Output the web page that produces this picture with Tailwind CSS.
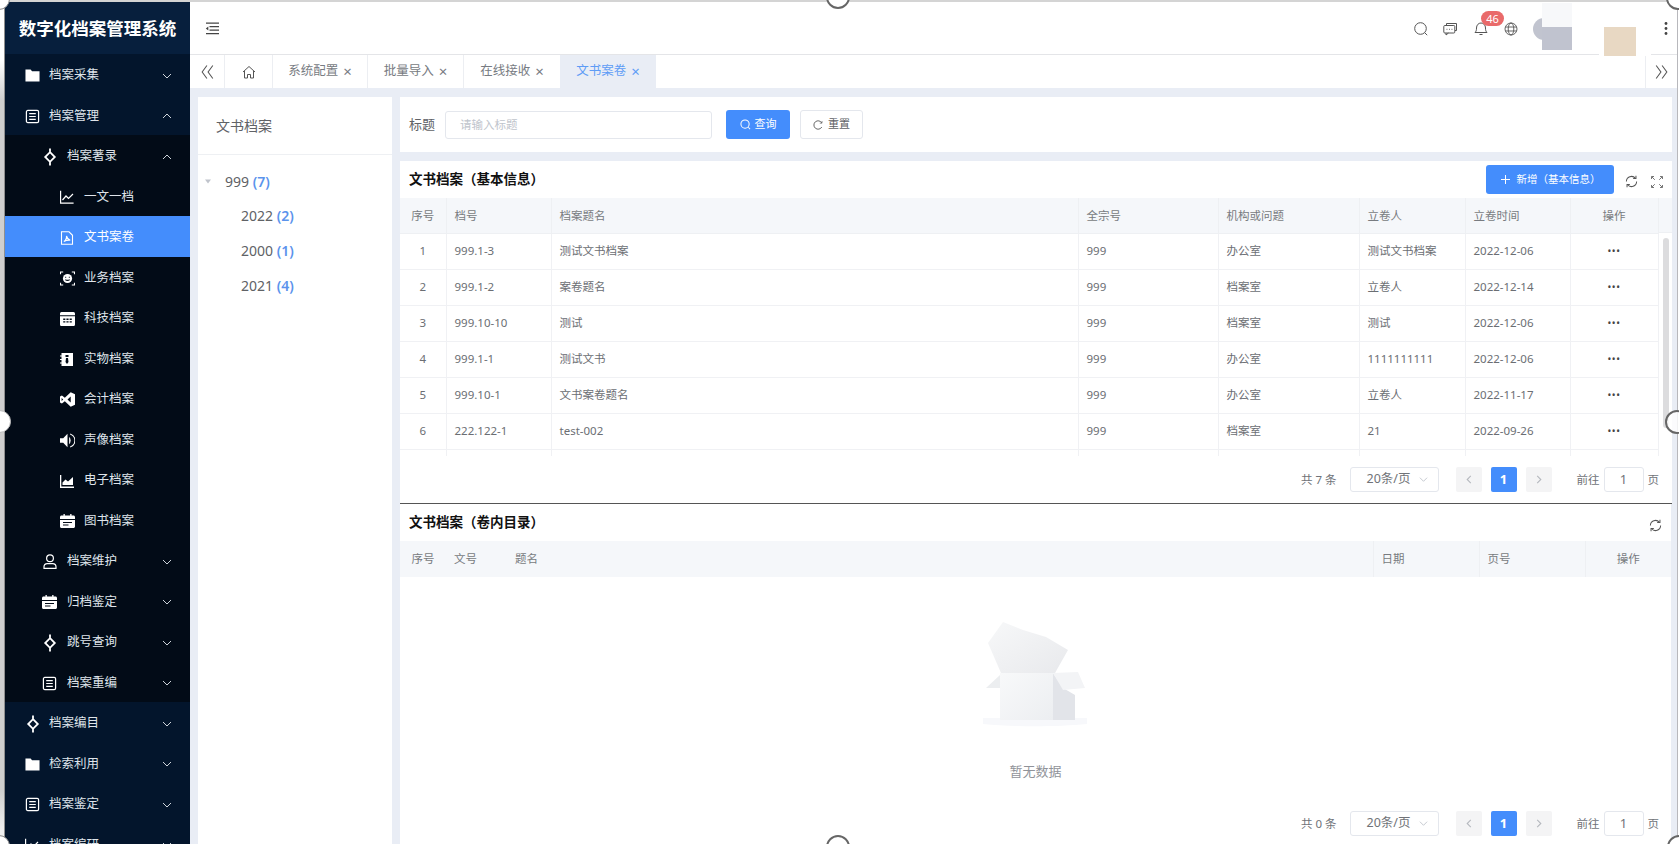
<!DOCTYPE html>
<html lang="zh-CN">
<head>
<meta charset="utf-8">
<title>数字化档案管理系统</title>
<script src="https://cdn.jsdelivr.net/npm/@tailwindcss/browser@4"></script>
</head>
<body class="m-0">
<div class="relative flex w-[1679px] h-[844px] overflow-hidden bg-white font-['Noto_Sans','Noto_Sans_CJK_SC',sans-serif] text-[#606266]">

  <!-- left window edge -->
  <div class="w-[5px] shrink-0 border-r border-[#8f8f8f] bg-[linear-gradient(to_bottom,#ffffff_0,#ffffff_60px,#cfcfcf_100px,#cfcfcf_790px,#f0f0f0_830px)]"></div>

  <!-- sidebar -->
  <aside class="w-[185px] shrink-0 mt-[2px] flex flex-col bg-[#03152c] text-[#dfe4ea] text-[12.5px]">
    <div class="h-[52px] shrink-0 flex items-center justify-center bg-[#071f3d] text-white text-[17.5px] font-bold">数字化档案管理系统</div>
    <div class="flex flex-col">
      <div class="h-[40.5px] pt-[3px] flex items-center pl-[20px] pr-[18px]">
        <svg class="w-[15px] h-[15px] mr-[9px]" viewBox="0 0 16 16" fill="#fff"><path d="M0.500 1.500h5.500l1.500 2h8v11h-15z"/></svg>
        <span class="flex-1">档案采集</span>
        <svg class="w-[10px] h-[10px]" viewBox="0 0 10 10" fill="none" stroke="#cfd5dc"><path d="M1 3l4 4 4-4"/></svg>
      </div>
      <div class="h-[40.5px] pt-[3px] flex items-center pl-[20px] pr-[18px]">
        <svg class="w-[15px] h-[15px] mr-[9px]" viewBox="0 0 16 16" fill="none" stroke="#fff" stroke-width="1.300"><rect x="1.500" y="1.500" width="13" height="13" rx="1.500"/><path d="M4.500 5h7M4.500 8h7M4.500 11h7"/></svg>
        <span class="flex-1">档案管理</span>
        <svg class="w-[10px] h-[10px]" viewBox="0 0 10 10" fill="none" stroke="#cfd5dc"><path d="M1 7l4-4 4 4"/></svg>
      </div>

      <div class="flex flex-col bg-[#020b17]">
        <div class="h-[40.5px] pt-[3px] flex items-center pl-[37px] pr-[18px]">
          <svg class="w-[16px] h-[18px] mr-[9px]" viewBox="0 0 16 18" fill="none" stroke="#fff" stroke-width="1.800"><path d="M8 0.500v3.500M8 14v3.500M8 4.200l4.800 4.800L8 13.800 3.200 9z"/></svg>
          <span class="flex-1">档案著录</span>
          <svg class="w-[10px] h-[10px]" viewBox="0 0 10 10" fill="none" stroke="#cfd5dc"><path d="M1 7l4-4 4 4"/></svg>
        </div>
        <div class="h-[40.5px] pt-[3px] flex items-center pl-[55px]">
          <svg class="w-[14px] h-[14px] mr-[10px]" viewBox="0 0 14 14" fill="none" stroke="#fff" stroke-width="1.200"><path d="M0.600 0.800v12.400h13M2.500 10l3.500-4 2.500 2.500 4.500-4.500"/></svg>
          <span>一文一档</span>
        </div>
        <div class="h-[40.5px] pt-[3px] flex items-center pl-[55px] bg-[#448dfc] text-white">
          <svg class="w-[14px] h-[14px] mr-[10px]" viewBox="0 0 14 14" fill="none" stroke="#fff" stroke-width="1.100"><path d="M1.500 0.800h7.500l3.500 3.500v9H1.500z"/><path d="M3.800 10.500c1.800-1 2.800-3.500 2.700-5.500.6 2.400 2 3.800 3.800 4.200-2.300-.2-4.500.2-6.500 1.300z"/></svg>
          <span>文书案卷</span>
        </div>
        <div class="h-[40.5px] pt-[3px] flex items-center pl-[55px]">
          <svg class="w-[15px] h-[15px] mr-[9px]" viewBox="0 0 14 14" fill="none" stroke="#fff" stroke-width="1"><path d="M0.500 3V1h2.500M11 1h2.500v2M13.500 11v2H11M3 13H0.500v-2"/><circle cx="7" cy="7" r="4.300" fill="#fff" stroke="none"/><path d="M5 8c1 1 3 1 4 0" stroke="#020b17"/><path d="M4.800 5.800h1M8.200 5.800h1" stroke="#020b17"/></svg>
          <span>业务档案</span>
        </div>
        <div class="h-[40.5px] pt-[3px] flex items-center pl-[55px]">
          <svg class="w-[15px] h-[15px] mr-[9px]" viewBox="0 0 14 14" fill="#fff"><path d="M0 2.500C0 1.700.6 1 1.400 1h11.200c.8 0 1.400.7 1.400 1.500V4H0z"/><path fill-rule="evenodd" d="M0 5h14v7.500c0 .8-.6 1.500-1.400 1.500H1.400C.6 14 0 13.300 0 12.500zM3 7v1.300h2V7zM6 7v1.300h2V7zM9 7v1.300h2V7zM3 9.500v1.300h2V9.500zM6 9.500v1.300h2V9.500zM9 9.500v1.300h2V9.500z"/></svg>
          <span>科技档案</span>
        </div>
        <div class="h-[40.5px] pt-[3px] flex items-center pl-[55px]">
          <svg class="w-[14px] h-[15px] mr-[10px]" viewBox="0 0 14 14" fill="#fff"><path fill-rule="evenodd" d="M1.500 0.500H13v13H1.500V11H0v-1h1.500V7.500H0v-1h1.500V4H0V3h1.500zM5.500 2.500v2h3v-2zM6 5.500l-.5 4L7 11.500l1.500-2-.5-4z"/></svg>
          <span>实物档案</span>
        </div>
        <div class="h-[40.5px] pt-[3px] flex items-center pl-[55px]">
          <svg class="w-[15px] h-[15px] mr-[9px]" viewBox="0 0 14 14" fill="#fff"><path fill-rule="evenodd" d="M10 0.300L14 2v10l-4 1.700-5.500-5L1.800 10.800 0 9.800V4.200l1.800-1 2.700 2.100zM10 4.300L7 7l3 2.700zM1.500 5.500v3L3 7z"/></svg>
          <span>会计档案</span>
        </div>
        <div class="h-[40.5px] pt-[3px] flex items-center pl-[55px]">
          <svg class="w-[15px] h-[15px] mr-[9px]" viewBox="0 0 14 14" fill="#fff"><path d="M0 4.800h3L7 .8v12.400l-4-4H0z"/><path d="M8.500 3.500a5 5 0 010 7z"/><path d="M9.500 1a6.300 6.300 0 010 12" fill="none" stroke="#fff" stroke-width="1"/></svg>
          <span>声像档案</span>
        </div>
        <div class="h-[40.5px] pt-[3px] flex items-center pl-[55px]">
          <svg class="w-[14px] h-[14px] mr-[10px]" viewBox="0 0 14 14" fill="#fff"><path d="M0 1h1.300v11.500H14V14H0z"/><path d="M2.500 11V8.500l3-3L8 7.500l5-4.500v8z"/></svg>
          <span>电子档案</span>
        </div>
        <div class="h-[40.5px] pt-[3px] flex items-center pl-[55px]">
          <svg class="w-[15px] h-[14px] mr-[9px]" viewBox="0 0 15 14" fill="#fff"><path fill-rule="evenodd" d="M1.500 1.500h2V0h1.300v1.500h5.400V0h1.300v1.500h2c.8 0 1.500.7 1.500 1.500v9.500c0 .8-.7 1.500-1.500 1.500h-12C.7 14 0 13.300 0 12.500V3c0-.8.700-1.500 1.500-1.500zM0 5v1h15V5zM3 8v1h9V8zM3 10.500v1h5.500v-1z"/></svg>
          <span>图书档案</span>
        </div>
        <div class="h-[40.5px] pt-[3px] flex items-center pl-[38px] pr-[18px]">
          <svg class="w-[14px] h-[15px] mr-[10px]" viewBox="0 0 14 15" fill="none" stroke="#fff" stroke-width="1.200"><circle cx="7" cy="4.200" r="3.400"/><path d="M1 14.300v-1.500c0-2 1.500-3.200 3.300-3.200h5.400c1.800 0 3.300 1.200 3.300 3.200v1.500z"/></svg>
          <span class="flex-1">档案维护</span>
          <svg class="w-[10px] h-[10px]" viewBox="0 0 10 10" fill="none" stroke="#cfd5dc"><path d="M1 3l4 4 4-4"/></svg>
        </div>
        <div class="h-[40.5px] pt-[3px] flex items-center pl-[37px] pr-[18px]">
          <svg class="w-[15px] h-[14px] mr-[10px]" viewBox="0 0 15 14" fill="#fff"><path fill-rule="evenodd" d="M1.500 1.500h2V0h1.300v1.500h5.400V0h1.300v1.500h2c.8 0 1.500.7 1.500 1.500v9.500c0 .8-.7 1.500-1.500 1.500h-12C.7 14 0 13.300 0 12.500V3c0-.8.700-1.500 1.500-1.500zM0 5v1h15V5zM3 8v1h9V8zM3 10.500v1h5.500v-1z"/></svg>
          <span class="flex-1">归档鉴定</span>
          <svg class="w-[10px] h-[10px]" viewBox="0 0 10 10" fill="none" stroke="#cfd5dc"><path d="M1 3l4 4 4-4"/></svg>
        </div>
        <div class="h-[40.5px] pt-[3px] flex items-center pl-[37px] pr-[18px]">
          <svg class="w-[16px] h-[18px] mr-[9px]" viewBox="0 0 16 18" fill="none" stroke="#fff" stroke-width="1.800"><path d="M8 0.500v3.500M8 14v3.500M8 4.200l4.800 4.800L8 13.800 3.200 9z"/></svg>
          <span class="flex-1">跳号查询</span>
          <svg class="w-[10px] h-[10px]" viewBox="0 0 10 10" fill="none" stroke="#cfd5dc"><path d="M1 3l4 4 4-4"/></svg>
        </div>
        <div class="h-[40.5px] pt-[3px] flex items-center pl-[37px] pr-[18px]">
          <svg class="w-[15px] h-[15px] mr-[10px]" viewBox="0 0 16 16" fill="none" stroke="#fff" stroke-width="1.300"><rect x="1.500" y="1.500" width="13" height="13" rx="1.500"/><path d="M4.500 5h7M4.500 8h7M4.500 11h7"/></svg>
          <span class="flex-1">档案重编</span>
          <svg class="w-[10px] h-[10px]" viewBox="0 0 10 10" fill="none" stroke="#cfd5dc"><path d="M1 3l4 4 4-4"/></svg>
        </div>
      </div>

      <div class="h-[40.5px] pt-[3px] flex items-center pl-[20px] pr-[18px]">
        <svg class="w-[16px] h-[18px] mr-[8px]" viewBox="0 0 16 18" fill="none" stroke="#fff" stroke-width="1.800"><path d="M8 0.500v3.500M8 14v3.500M8 4.200l4.800 4.800L8 13.800 3.200 9z"/></svg>
        <span class="flex-1">档案编目</span>
        <svg class="w-[10px] h-[10px]" viewBox="0 0 10 10" fill="none" stroke="#cfd5dc"><path d="M1 3l4 4 4-4"/></svg>
      </div>
      <div class="h-[40.5px] pt-[3px] flex items-center pl-[20px] pr-[18px]">
        <svg class="w-[15px] h-[15px] mr-[9px]" viewBox="0 0 16 16" fill="#fff"><path d="M0.500 1.500h5.500l1.500 2h8v11h-15z"/></svg>
        <span class="flex-1">检索利用</span>
        <svg class="w-[10px] h-[10px]" viewBox="0 0 10 10" fill="none" stroke="#cfd5dc"><path d="M1 3l4 4 4-4"/></svg>
      </div>
      <div class="h-[40.5px] pt-[3px] flex items-center pl-[20px] pr-[18px]">
        <svg class="w-[15px] h-[15px] mr-[9px]" viewBox="0 0 16 16" fill="none" stroke="#fff" stroke-width="1.300"><rect x="1.500" y="1.500" width="13" height="13" rx="1.500"/><path d="M4.500 5h7M4.500 8h7M4.500 11h7"/></svg>
        <span class="flex-1">档案鉴定</span>
        <svg class="w-[10px] h-[10px]" viewBox="0 0 10 10" fill="none" stroke="#cfd5dc"><path d="M1 3l4 4 4-4"/></svg>
      </div>
      <div class="h-[40.5px] pt-[3px] flex items-center pl-[20px] pr-[18px]">
        <svg class="w-[14px] h-[14px] mr-[10px]" viewBox="0 0 14 14" fill="none" stroke="#fff" stroke-width="1.200"><path d="M0.600 0.800v12.400h13M2.500 10l3.500-4 2.500 2.500 4.500-4.500"/></svg>
        <span class="flex-1">档案编研</span>
        <svg class="w-[10px] h-[10px]" viewBox="0 0 10 10" fill="none" stroke="#cfd5dc"><path d="M1 3l4 4 4-4"/></svg>
      </div>
    </div>
  </aside>

  <!-- main -->
  <div class="flex-1 min-w-0 mt-[2px] flex flex-col">
    <!-- header -->
    <header class="relative h-[53px] shrink-0 flex items-center pl-[15px] pr-[9px] border-b border-[#e4e5e8] bg-white">
      <svg class="w-[14px] h-[13px]" viewBox="0 0 14 13" fill="none" stroke="#444" stroke-width="1.200"><path d="M1 1.200h13M4.500 4.700h9.500M4.500 8.200h9.500M1 11.700h13"/><path d="M3.300 4.500L.8 6.500l2.500 2z" fill="#444" stroke="none"/></svg>
      <div class="flex-1"></div>
      <svg class="w-[14px] h-[14px] mr-[15px] mt-[1px]" viewBox="0 0 14 14" fill="none" stroke="#555" stroke-width="1"><circle cx="6.500" cy="6.500" r="5.800"/><path d="M10.700 10.700l2.500 2.500"/></svg>
      <svg class="w-[14px] h-[14px] mr-[17px] mt-[1px]" viewBox="0 0 14 14" fill="none" stroke="#555" stroke-width="1"><path d="M3.500 3V1.500h10V8.500H12"/><rect x="0.800" y="3.500" width="11" height="7.500" rx="1"/><path d="M3 11v2l2.500-2M3.500 7.300h.9M6 7.300h.9M8.500 7.300h.9"/></svg>
      <svg class="w-[14px] h-[15px] mr-[16px] mt-[1px]" viewBox="0 0 14 15" fill="none" stroke="#555" stroke-width="1"><path d="M1 11.500c1-1 1.500-2 1.500-4.500 0-3 2-5 4.500-5s4.500 2 4.500 5c0 2.500.5 3.500 1.500 4.500zM5.500 13.500h3"/></svg>
      <svg class="w-[14px] h-[14px] mr-[146px] mt-[1px]" viewBox="0 0 14 14" fill="none" stroke="#555" stroke-width="0.900"><circle cx="7" cy="7" r="6"/><ellipse cx="7" cy="7" rx="2.800" ry="6"/><path d="M1.300 5h11.400M1.300 9h11.400"/></svg>
      <svg class="w-[4px] h-[13px]" viewBox="0 0 4 13" fill="#444"><circle cx="2" cy="1.500" r="1.400"/><circle cx="2" cy="6.500" r="1.400"/><circle cx="2" cy="11.500" r="1.400"/></svg>

      <!-- badge and blurred avatar patches -->
      <span class="absolute left-[1291px] top-[9px] w-[23px] h-[15px] rounded-full bg-[#e96a6a] text-white text-[11px] leading-[15px] text-center">46</span>
      <span class="absolute left-[1343px] top-[16px] w-[24px] h-[22px] rounded-full bg-[#c1c4cf]"></span>
      <span class="absolute left-[1352px] top-[1px] w-[30px] h-[24px] bg-[#f7f8fa]"></span>
      <span class="absolute left-[1352px] top-[25px] w-[30px] h-[23px] bg-[#c0c3cf]"></span>
      <span class="absolute left-[1409px] top-[20px] w-[52px] h-[34px] bg-white"></span>
      <span class="absolute left-[1414px] top-[25px] w-[32px] h-[29px] bg-[#e8d8c3]"></span>
    </header>

    <!-- tabs -->
    <nav class="h-[33px] shrink-0 flex items-stretch text-[12.5px] text-[#777b82] bg-white">
      <div class="w-[35px] flex items-center justify-center border-r border-[#eceef2]">
        <svg class="w-[13px] h-[16px]" viewBox="0 0 11 13" fill="none" stroke="#555" stroke-width="0.900"><path d="M5 1L1 6.500 5 12M10 1L6 6.500 10 12"/></svg>
      </div>
      <div class="w-[48px] flex items-center justify-center border-r border-[#eceef2]">
        <svg class="w-[14px] h-[14px]" viewBox="0 0 14 14" fill="none" stroke="#555" stroke-width="1"><path d="M1 7l6-5.500L13 7M2.500 6v7h3V9.500h3V13h3V6"/></svg>
      </div>
      <div class="w-[95px] flex items-center justify-center gap-[5px] border-r border-[#eceef2]"><span>系统配置</span><span class="text-[15px] leading-none">×</span></div>
      <div class="w-[96px] flex items-center justify-center gap-[5px] border-r border-[#eceef2]"><span>批量导入</span><span class="text-[15px] leading-none">×</span></div>
      <div class="w-[96px] flex items-center justify-center gap-[5px]"><span>在线接收</span><span class="text-[15px] leading-none">×</span></div>
      <div class="w-[96px] flex items-center justify-center gap-[5px] bg-[#e9edf5] text-[#5e9cf6]"><span>文书案卷</span><span class="text-[15px] leading-none">×</span></div>
      <div class="flex-1"></div>
      <div class="w-[32px] flex items-center justify-center border-l border-[#eceef2]">
        <svg class="w-[13px] h-[16px]" viewBox="0 0 11 13" fill="none" stroke="#555" stroke-width="0.900"><path d="M1 1l4 5.500L1 12M6 1l4 5.500L6 12"/></svg>
      </div>
    </nav>

    <!-- content -->
    <main class="flex-1 min-h-0 flex gap-[8px] pt-[9px] pl-[8px] pr-[5px] bg-[#e9edf5]">
      <!-- tree -->
      <section class="w-[194px] shrink-0 bg-white">
        <div class="h-[58px] flex items-center pl-[18px] border-b border-[#eef0f3] text-[14px]">文书档案</div>
        <div class="pt-[9px] text-[14px]">
          <div class="h-[34px] flex items-center pl-[6px]">
            <svg class="w-[8px] h-[8px] mr-[13px]" viewBox="0 0 8 8" fill="#c0c4cc"><path d="M1 2.500h6L4 6.500z"/></svg>
            <span>999&nbsp;<b class="font-semibold text-[#5b93ec]">(7)</b></span>
          </div>
          <div class="h-[35px] flex items-center pl-[43px]"><span>2022&nbsp;<b class="font-semibold text-[#5b93ec]">(2)</b></span></div>
          <div class="h-[35px] flex items-center pl-[43px]"><span>2000&nbsp;<b class="font-semibold text-[#5b93ec]">(1)</b></span></div>
          <div class="h-[35px] flex items-center pl-[43px]"><span>2021&nbsp;<b class="font-semibold text-[#5b93ec]">(4)</b></span></div>
        </div>
      </section>

      <!-- right column -->
      <div class="flex-1 min-w-0 flex flex-col">
        <!-- search -->
        <div class="h-[55px] shrink-0 flex items-center pl-[9px] bg-white">
          <span class="text-[13px] w-[36px]">标题</span>
          <div class="w-[267px] h-[28px] flex items-center pl-[14px] border border-[#e4e7ed] rounded-[3px] text-[11.5px] text-[#c0c4cc]">请输入标题</div>
          <div class="ml-[14px] w-[64px] h-[29px] flex items-center justify-center gap-[4px] rounded-[3px] bg-[#448dfc] text-white text-[11px]">
            <svg class="w-[11px] h-[11px]" viewBox="0 0 12 12" fill="none" stroke="#fff" stroke-width="1.100"><circle cx="5.500" cy="5.500" r="4.500"/><path d="M9 9l2 2"/></svg>查询
          </div>
          <div class="ml-[10px] w-[63px] h-[29px] flex items-center justify-center gap-[5px] rounded-[3px] border border-[#e4e7ed] text-[11px]">
            <svg class="w-[10px] h-[10px]" viewBox="0 0 10 10" fill="none" stroke="#666" stroke-width="1"><path d="M8.800 3A4.200 4.200 0 108.800 7"/><path d="M9 1v2.200H6.800" stroke-width="0.700"/></svg>重置
          </div>
        </div>

        <!-- table panel 1 -->
        <section class="mt-[9px] h-[343px] shrink-0 bg-white border-b border-[#555] flex flex-col">
          <div class="h-[37px] shrink-0 flex items-center pl-[9px] pr-[9px]">
            <h2 class="flex-1 text-[13.5px] font-bold text-[#111]">文书档案（基本信息）</h2>
            <div class="w-[128px] h-[29px] flex items-center justify-center gap-[6px] rounded-[3px] bg-[#448dfc] text-white text-[10.5px]">
              <svg class="w-[11px] h-[11px]" viewBox="0 0 11 11" stroke="#fff"><path d="M5.500 1v9M1 5.500h9"/></svg>新增（基本信息）
            </div>
            <svg class="w-[13px] h-[13px] ml-[11px] mr-[13px] mt-[4px]" viewBox="0 0 14 14" fill="none" stroke="#555" stroke-width="1.100"><path d="M1.500 7a5.500 5.500 0 019.700-3.500M12.500 7a5.500 5.500 0 01-9.700 3.500"/><path d="M11.800 0.800v3h-3M2.200 13.200v-3h3"/></svg>
            <svg class="w-[12px] h-[12px] mt-[4px]" viewBox="0 0 12 12" fill="none" stroke="#666" stroke-width="0.900"><path d="M0.500 3V.5H3M.8.8l3 3M9 .5h2.500V3M11.200.8l-3 3M11.500 9v2.500H9M11.200 11.200l-3-3M3 11.500H.5V9M.8 11.200l3-3"/></svg>
          </div>
          <div class="h-[258px] shrink-0 flex overflow-hidden">
            <table class="w-[1258px] h-fit table-fixed border-collapse text-[11.5px] text-[#6b6e73]">
              <colgroup><col class="w-[46px]"><col class="w-[105px]"><col class="w-[527px]"><col class="w-[140px]"><col class="w-[141px]"><col class="w-[106px]"><col class="w-[105px]"><col class="w-[88px]"></colgroup>
              <thead class="bg-[#f5f7fa] text-[#787b80]">
                <tr class="h-[35px]">
                  <th class="font-normal text-center border-b border-r border-[#eef0f3]">序号</th>
                  <th class="font-normal text-left pl-[8px] border-b border-r border-[#eef0f3]">档号</th>
                  <th class="font-normal text-left pl-[8px] border-b border-r border-[#eef0f3]">档案题名</th>
                  <th class="font-normal text-left pl-[8px] border-b border-r border-[#eef0f3]">全宗号</th>
                  <th class="font-normal text-left pl-[8px] border-b border-r border-[#eef0f3]">机构或问题</th>
                  <th class="font-normal text-left pl-[8px] border-b border-r border-[#eef0f3]">立卷人</th>
                  <th class="font-normal text-left pl-[8px] border-b border-r border-[#eef0f3]">立卷时间</th>
                  <th class="font-normal text-center border-b border-r border-[#eef0f3]">操作</th>
                </tr>
              </thead>
              <tbody>
                <tr class="h-[36px]">
                  <td class="text-center border-b border-r border-[#f0f1f4]">1</td>
                  <td class="pl-[8px] border-b border-r border-[#f0f1f4]">999.1-3</td>
                  <td class="pl-[8px] border-b border-r border-[#f0f1f4]">测试文书档案</td>
                  <td class="pl-[8px] border-b border-r border-[#f0f1f4]">999</td>
                  <td class="pl-[8px] border-b border-r border-[#f0f1f4]">办公室</td>
                  <td class="pl-[8px] border-b border-r border-[#f0f1f4]">测试文书档案</td>
                  <td class="pl-[8px] border-b border-r border-[#f0f1f4]">2022-12-06</td>
                  <td class="text-center border-b border-r border-[#f0f1f4] text-[#444] text-[10px] tracking-[0.5px]">•••</td>
                </tr>
                <tr class="h-[36px]">
                  <td class="text-center border-b border-r border-[#f0f1f4]">2</td>
                  <td class="pl-[8px] border-b border-r border-[#f0f1f4]">999.1-2</td>
                  <td class="pl-[8px] border-b border-r border-[#f0f1f4]">案卷题名</td>
                  <td class="pl-[8px] border-b border-r border-[#f0f1f4]">999</td>
                  <td class="pl-[8px] border-b border-r border-[#f0f1f4]">档案室</td>
                  <td class="pl-[8px] border-b border-r border-[#f0f1f4]">立卷人</td>
                  <td class="pl-[8px] border-b border-r border-[#f0f1f4]">2022-12-14</td>
                  <td class="text-center border-b border-r border-[#f0f1f4] text-[#444] text-[10px] tracking-[0.5px]">•••</td>
                </tr>
                <tr class="h-[36px]">
                  <td class="text-center border-b border-r border-[#f0f1f4]">3</td>
                  <td class="pl-[8px] border-b border-r border-[#f0f1f4]">999.10-10</td>
                  <td class="pl-[8px] border-b border-r border-[#f0f1f4]">测试</td>
                  <td class="pl-[8px] border-b border-r border-[#f0f1f4]">999</td>
                  <td class="pl-[8px] border-b border-r border-[#f0f1f4]">档案室</td>
                  <td class="pl-[8px] border-b border-r border-[#f0f1f4]">测试</td>
                  <td class="pl-[8px] border-b border-r border-[#f0f1f4]">2022-12-06</td>
                  <td class="text-center border-b border-r border-[#f0f1f4] text-[#444] text-[10px] tracking-[0.5px]">•••</td>
                </tr>
                <tr class="h-[36px]">
                  <td class="text-center border-b border-r border-[#f0f1f4]">4</td>
                  <td class="pl-[8px] border-b border-r border-[#f0f1f4]">999.1-1</td>
                  <td class="pl-[8px] border-b border-r border-[#f0f1f4]">测试文书</td>
                  <td class="pl-[8px] border-b border-r border-[#f0f1f4]">999</td>
                  <td class="pl-[8px] border-b border-r border-[#f0f1f4]">办公室</td>
                  <td class="pl-[8px] border-b border-r border-[#f0f1f4]">1111111111</td>
                  <td class="pl-[8px] border-b border-r border-[#f0f1f4]">2022-12-06</td>
                  <td class="text-center border-b border-r border-[#f0f1f4] text-[#444] text-[10px] tracking-[0.5px]">•••</td>
                </tr>
                <tr class="h-[36px]">
                  <td class="text-center border-b border-r border-[#f0f1f4]">5</td>
                  <td class="pl-[8px] border-b border-r border-[#f0f1f4]">999.10-1</td>
                  <td class="pl-[8px] border-b border-r border-[#f0f1f4]">文书案卷题名</td>
                  <td class="pl-[8px] border-b border-r border-[#f0f1f4]">999</td>
                  <td class="pl-[8px] border-b border-r border-[#f0f1f4]">办公室</td>
                  <td class="pl-[8px] border-b border-r border-[#f0f1f4]">立卷人</td>
                  <td class="pl-[8px] border-b border-r border-[#f0f1f4]">2022-11-17</td>
                  <td class="text-center border-b border-r border-[#f0f1f4] text-[#444] text-[10px] tracking-[0.5px]">•••</td>
                </tr>
                <tr class="h-[36px]">
                  <td class="text-center border-b border-r border-[#f0f1f4]">6</td>
                  <td class="pl-[8px] border-b border-r border-[#f0f1f4]">222.122-1</td>
                  <td class="pl-[8px] border-b border-r border-[#f0f1f4]">test-002</td>
                  <td class="pl-[8px] border-b border-r border-[#f0f1f4]">999</td>
                  <td class="pl-[8px] border-b border-r border-[#f0f1f4]">档案室</td>
                  <td class="pl-[8px] border-b border-r border-[#f0f1f4]">21</td>
                  <td class="pl-[8px] border-b border-r border-[#f0f1f4]">2022-09-26</td>
                  <td class="text-center border-b border-r border-[#f0f1f4] text-[#444] text-[10px] tracking-[0.5px]">•••</td>
                </tr>
                <tr class="h-[36px]">
                  <td class="border-r border-[#f0f1f4]"></td><td class="border-r border-[#f0f1f4]"></td><td class="border-r border-[#f0f1f4]"></td><td class="border-r border-[#f0f1f4]"></td><td class="border-r border-[#f0f1f4]"></td><td class="border-r border-[#f0f1f4]"></td><td class="border-r border-[#f0f1f4]"></td><td class="border-r border-[#f0f1f4]"></td>
                </tr>
              </tbody>
            </table>
            <div class="w-[14px] shrink-0">
              <div class="h-[35px] bg-[#f5f7fa] border-b border-[#eef0f3]"></div>
              <div class="ml-[4px] mt-[5px] w-[6px] h-[190px] rounded-full bg-[#dcdcde]"></div>
            </div>
          </div>
          <!-- pagination -->
          <div class="flex-1 flex items-center justify-end pr-[13px] text-[11.5px] text-[#707378]">
            <span class="mr-[13px]">共 7 条</span>
            <div class="w-[89px] h-[25px] flex items-center pl-[16px] pr-[10px] border border-[#e4e7ed] rounded-[3px] mr-[17px] text-[12.5px]"><span class="flex-1">20条/页</span><svg class="w-[9px] h-[9px]" viewBox="0 0 10 10" fill="none" stroke="#c0c4cc"><path d="M1 3l4 4 4-4"/></svg></div>
            <div class="w-[26px] h-[25px] flex items-center justify-center bg-[#f4f4f5] rounded-[2px] mr-[9px]"><svg class="w-[8px] h-[9px]" viewBox="0 0 8 10" fill="none" stroke="#b5b8be" stroke-width="1.200"><path d="M6 1L2 5l4 4"/></svg></div>
            <div class="w-[26px] h-[25px] flex items-center justify-center bg-[#448dfc] text-white text-[13px] font-bold rounded-[2px] mr-[9px]">1</div>
            <div class="w-[26px] h-[25px] flex items-center justify-center bg-[#f4f4f5] rounded-[2px] mr-[25px]"><svg class="w-[8px] h-[9px]" viewBox="0 0 8 10" fill="none" stroke="#b5b8be" stroke-width="1.200"><path d="M2 1l4 4-4 4"/></svg></div>
            <span class="mr-[4px]">前往</span>
            <div class="w-[40px] h-[25px] flex items-center justify-center border border-[#e4e7ed] rounded-[3px] mr-[4px] text-[13px]">1</div>
            <span>页</span>
          </div>
        </section>

        <!-- table panel 2 -->
        <section class="flex-1 min-h-0 mr-[1px] bg-white flex flex-col">
          <div class="h-[37px] shrink-0 flex items-center pl-[9px] pr-[9px]">
            <h2 class="flex-1 text-[13.5px] font-bold text-[#111]">文书档案（卷内目录）</h2>
            <svg class="w-[13px] h-[13px] mt-[5px]" viewBox="0 0 14 14" fill="none" stroke="#555" stroke-width="1.100"><path d="M1.500 7a5.500 5.500 0 019.700-3.500M12.500 7a5.500 5.500 0 01-9.700 3.500"/><path d="M11.800 0.800v3h-3M2.200 13.200v-3h3"/></svg>
          </div>
          <table class="w-full table-fixed border-collapse text-[11.5px]">
            <colgroup><col class="w-[46px]"><col class="w-[61px]"><col class="w-[866px]"><col class="w-[106px]"><col class="w-[106px]"><col class="w-[86px]"></colgroup>
            <thead class="bg-[#f5f7fa] text-[#787b80]">
              <tr class="h-[36px]">
                <th class="font-normal text-center">序号</th>
                <th class="font-normal text-left pl-[8px]">文号</th>
                <th class="font-normal text-left pl-[8px] border-r border-[#eef0f3]">题名</th>
                <th class="font-normal text-left pl-[8px] border-r border-[#eef0f3]">日期</th>
                <th class="font-normal text-left pl-[8px] border-r border-[#eef0f3]">页号</th>
                <th class="font-normal text-center">操作</th>
              </tr>
            </thead>
          </table>
          <div class="flex-1 min-h-0 flex flex-col items-center pt-[43px]">
            <svg class="w-[110px] h-[110px] shrink-0 ml-[5px]" viewBox="0 0 110 110">
              <defs>
                <linearGradient id="lid" x1="0" y1="0" x2="1" y2="1"><stop offset="0" stop-color="#f7f8f9"/><stop offset="1" stop-color="#e8e9ec"/></linearGradient>
                <linearGradient id="front" x1="0" y1="0" x2="1" y2="1"><stop offset="0" stop-color="#f8f9fa"/><stop offset="1" stop-color="#eceef1"/></linearGradient>
              </defs>
              <path d="M0 98h104v6c-30 3-74 3-104 0z" fill="#f7f8fb"/>
              <path d="M5 23L20 2l20 8 23 7 22 13-13 23H18z" fill="url(#lid)"/>
              <path d="M3 68L17 55v13z" fill="#eceef0"/>
              <path d="M17 53h53v47H17z" fill="url(#front)"/>
              <path d="M70 53l10 15 12 7v25H70z" fill="#e2e4e9"/>
              <path d="M70 53l25-1 7 16-22 2z" fill="#f3f4f6"/>
            </svg>
            <span class="mt-[32px] text-[13px] text-[#909399]">暂无数据</span>
          </div>
          <div class="h-[33px] shrink-0 flex items-start justify-end pr-[12px] text-[11.5px] text-[#707378]">
            <span class="mr-[13px] leading-[25px]">共 0 条</span>
            <div class="w-[89px] h-[25px] flex items-center pl-[16px] pr-[10px] border border-[#e4e7ed] rounded-[3px] mr-[17px] text-[12.5px]"><span class="flex-1">20条/页</span><svg class="w-[9px] h-[9px]" viewBox="0 0 10 10" fill="none" stroke="#c0c4cc"><path d="M1 3l4 4 4-4"/></svg></div>
            <div class="w-[26px] h-[25px] flex items-center justify-center bg-[#f4f4f5] rounded-[2px] mr-[9px]"><svg class="w-[8px] h-[9px]" viewBox="0 0 8 10" fill="none" stroke="#b5b8be" stroke-width="1.200"><path d="M6 1L2 5l4 4"/></svg></div>
            <div class="w-[26px] h-[25px] flex items-center justify-center bg-[#448dfc] text-white text-[13px] font-bold rounded-[2px] mr-[9px]">1</div>
            <div class="w-[26px] h-[25px] flex items-center justify-center bg-[#f4f4f5] rounded-[2px] mr-[25px]"><svg class="w-[8px] h-[9px]" viewBox="0 0 8 10" fill="none" stroke="#b5b8be" stroke-width="1.200"><path d="M2 1l4 4-4 4"/></svg></div>
            <span class="mr-[4px] leading-[25px]">前往</span>
            <div class="w-[40px] h-[25px] flex items-center justify-center border border-[#e4e7ed] rounded-[3px] mr-[4px] text-[13px]">1</div>
            <span class="leading-[25px]">页</span>
          </div>
        </section>
      </div>
    </main>
  </div>

  <!-- right window edge -->
  <div class="w-[2px] shrink-0 border-l border-[#b8b8bc] bg-white"></div>

  <!-- screenshot selection frame and its handles, lying over the page -->
  <div class="absolute left-0 right-0 top-0 h-[2px] bg-[#d4d4d4]"></div>
  <span class="absolute left-[826px] -top-[15px] w-[24px] h-[24px] rounded-full bg-white border-2 border-[#666]"></span>
  <span class="absolute left-[826px] top-[835px] w-[24px] h-[24px] rounded-full bg-white border-2 border-[#666]"></span>
  <span class="absolute -left-[12px] top-[410px] w-[23px] h-[23px] rounded-full bg-white border border-[#bbb]"></span>
  <span class="absolute left-[1665px] top-[410px] w-[24px] h-[24px] rounded-full bg-white/80 border-2 border-[#666]"></span>
  <span class="absolute -left-[12px] -top-[12px] w-[22px] h-[22px] rounded-full bg-white border border-[#888]"></span>
  <span class="absolute left-[1666px] -top-[14px] w-[24px] h-[24px] rounded-full bg-white border-2 border-[#666]"></span>
  <span class="absolute -left-[12px] top-[835px] w-[22px] h-[22px] rounded-full bg-white border border-[#888]"></span>
  <span class="absolute left-[1667px] top-[835px] w-[24px] h-[24px] rounded-full bg-white border-2 border-[#666]"></span>
</div>
</body>
</html>
